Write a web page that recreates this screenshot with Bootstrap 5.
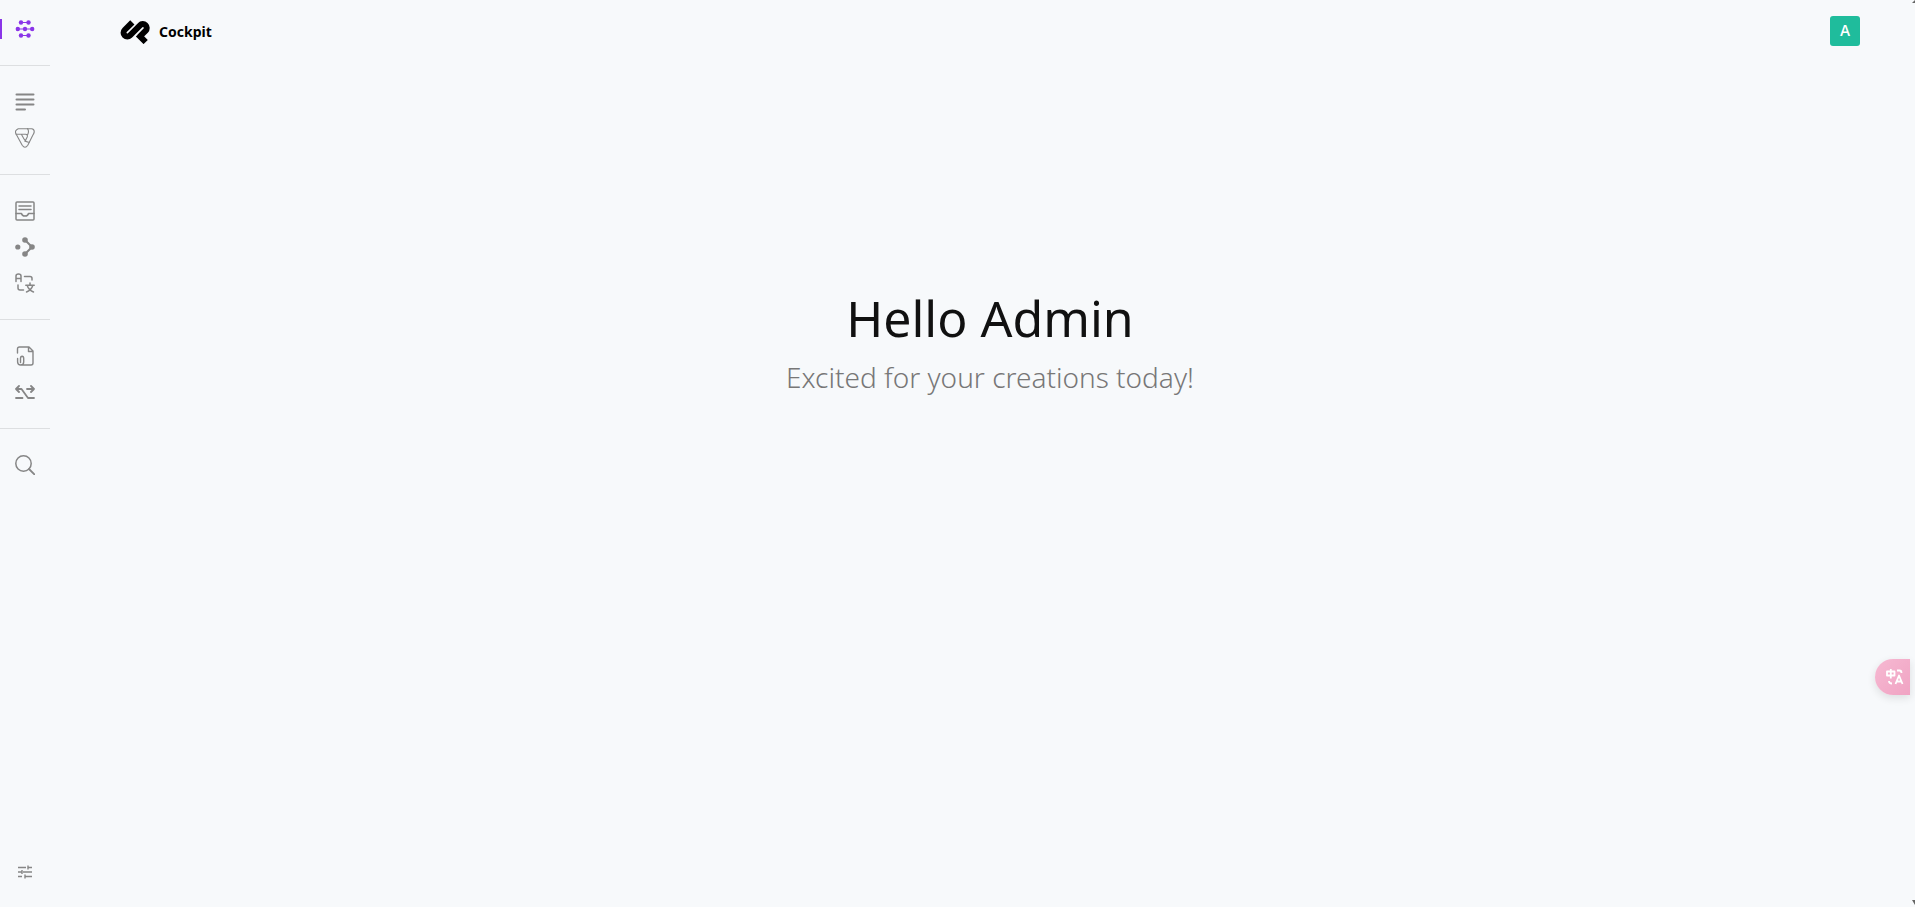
<!DOCTYPE html>
<html lang="en">
<head>
<meta charset="utf-8">
<meta name="viewport" content="width=device-width, initial-scale=1">
<title>Cockpit</title>
<link href="https://cdn.jsdelivr.net/npm/bootstrap@5.3.0/dist/css/bootstrap.min.css" rel="stylesheet">
<style>
body { background: #f7f9fb; color: #111; font-family: "Noto Sans", "Open Sans", sans-serif; }
.side { width: 50px; padding: 11px 0 17px; }
.side a { display: flex; height: 36px; align-items: center; justify-content: center; color: #868686; position: relative; }
.side a.active { color: #8a35e8; }
.side a.active::before { content: ""; position: absolute; left: 0; top: 8px; width: 2px; height: 20px; background: #8a35e8; }
.side hr { margin: 18px 0; border-top: 1px solid #dddfe1; opacity: 1; }
.side svg, .translate svg { fill: none; stroke: currentColor; stroke-width: 1.5; stroke-linecap: round; stroke-linejoin: round; }
.content { padding: 0 50px 0 70px; margin-right: 5px; }
.topbar { height: 62px; }
.brand { color: #000; font-size: 14px; font-weight: 700; gap: 9px; }
.avatar { width: 30px; height: 30px; border-radius: 3px; background: #1fbc9c; color: #fff; font: 500 15px/30px Inter, sans-serif; }
.hero { padding-top: 220px; }
.hero h1 { font-size: 50px; line-height: 72px; font-weight: 400; margin: 0; }
.hero p { font-size: 28px; line-height: 46px; font-weight: 300; color: #777; margin: 0; }
.translate { right: 5px; top: 659px; width: 35px; height: 36px; border-radius: 18px 0 0 18px; background: linear-gradient(135deg, #f6b9d2, #f0a3c3); color: #fff; padding-left: 10px; box-shadow: 0 3px 8px #0000001c; }
.arrow { right: 0; width: 3px; height: 3px; background: #666; }
.arrow.up { top: 0; clip-path: polygon(100% 0, 100% 100%, 0 100%); }
.arrow.down { bottom: 2px; height: 5px; clip-path: polygon(0 0, 100% 0, 100% 100%); }
</style>
</head>
<body class="d-flex min-vh-100">
<nav class="side d-flex flex-column flex-shrink-0" aria-label="Main">
  <a href="#" class="active" aria-label="Dashboard"><svg width="20" height="20" viewBox="0 0 20 20"><path d="M6 3.500h7.500M3 10h14M6 16.500h7.500" stroke-width="1"/><g fill="currentColor" stroke="none"><circle cx="6" cy="3.500" r="2.200"/><circle cx="13.500" cy="3.500" r="2.200"/><circle cx="2.800" cy="10" r="2.200"/><circle cx="10" cy="10" r="2.200"/><circle cx="17.200" cy="10" r="2.200"/><circle cx="6" cy="16.500" r="2.200"/><circle cx="13.500" cy="16.500" r="2.200"/></g></svg></a>
  <hr>
  <a href="#" aria-label="Content"><svg width="20" height="20" viewBox="0 0 20 20"><path d="M1.500 2.500h17M1.500 7.500h17M1.500 12.500h17M1.500 17.500h8.500" stroke-width="2"/></svg></a>
  <a href="#" aria-label="Assets"><svg width="20" height="20" viewBox="0 0 20 20"><g stroke-width="1.100"><path d="M3.200.7H16.600Q19.500 1 19.200 4.200Q18.900 5.800 17.900 7L12.800 17.300Q10 21.200 7.200 17.300L1.200 6.300Q-.9 2.600 3.200.7Z"/><path d="M1.200 6.300H10.500Q13 6.500 12.200 9L10 13.500M12.500 .7Q14.300 3 12.800 6.200L12.200 7.500M6.500 6.500L9 11Q11 14.500 14.300 14.200"/></g></svg></a>
  <hr>
  <a href="#" aria-label="Pages"><svg width="20" height="20" viewBox="0 0 20 20"><rect x="1" y="1" width="18" height="18" rx="1"/><path d="M4 5h12M4 8.500h12M1 12.500h5.500q.5 2.500 3.500 2.500t3.500-2.500H19"/></svg></a>
  <a href="#" aria-label="API"><svg width="20" height="20" viewBox="0 0 20 20"><path d="M10 3l7 7-7 7" stroke-width="2"/><g fill="currentColor" stroke="none"><circle cx="10" cy="3" r="2.800"/><circle cx="17" cy="10" r="2.800"/><circle cx="10" cy="17" r="2.800"/><circle cx="2.800" cy="10" r="2.600"/></g></svg></a>
  <a href="#" aria-label="Locales"><svg width="20" height="20" viewBox="0 0 20 20"><path d="M1 8.500V3Q1 1 3.500 1T6 3V8.500M1 5.500h5M9.500 3.500h5.500q2 0 2 2V7M3 12v3q0 2 2 2h3.500M10.800 12.200h8.400M15 10v2M12.200 12.500q1.500 4.500 6.300 6.500M17.800 12.500q-1.500 4.500-6.300 6.500"/></svg></a>
  <hr>
  <a href="#" aria-label="Logs"><svg width="20" height="20" viewBox="0 0 20 20"><path d="M2.500 7V3q0-2 2-2H14l4 4v12q0 2-2 2H5.500M13.500 1v4.500H18M5.500 16.500v-4q0-2.300 1.600-2.300t1.600 2.300v3.500q0 3-3 3T2.600 16v-3.500" stroke-width="1.400"/></svg></a>
  <a href="#" aria-label="Redirects"><svg width="20" height="20" viewBox="0 0 20 20"><path d="M4 4L1 7l3 3M1 7h5.500l6.500 9H19M1 16h6.500M12 7h7M16 4l3 3-3 3" stroke-width="1.800"/></svg></a>
  <hr>
  <a href="#" aria-label="Search"><svg width="20" height="20" viewBox="0 0 20 20"><circle cx="8.500" cy="8.500" r="7.700"/><path d="M14 14l5.500 5.500" stroke-width="1.800"/></svg></a>
  <a href="#" class="mt-auto" aria-label="Settings"><svg width="14" height="14" viewBox="0 0 14 14"><path d="M0 2.500h8M10 2.500h4M10 .5v4M0 7h4M5 7h9M4 5v4M0 11.500h4M7 11.500h7M7 9.500v4" stroke-linecap="butt" stroke-width="1.400"/></svg></a>
</nav>
<main class="content flex-grow-1">
  <header class="topbar d-flex align-items-center justify-content-between">
    <a href="#" class="brand d-flex align-items-center text-decoration-none">
      <svg width="30" height="26" viewBox="0 0 90 78" fill="none" stroke="#000" stroke-width="18" aria-hidden="true"><path d="M37 13L14 36A11.300 11.300 0 0 0 30 52L60 22A11.500 11.500 0 0 1 77 38L58 57M54 49L77 72"/></svg>
      <span>Cockpit</span>
    </a>
    <button type="button" class="avatar border-0 p-0 text-center" aria-label="Account">A</button>
  </header>
  <section class="hero text-center">
    <h1>Hello Admin</h1>
    <p>Excited for your creations today!</p>
  </section>
</main>
<button type="button" class="translate position-fixed border-0 d-flex align-items-center justify-content-center" aria-label="Translate"><svg width="18" height="18" viewBox="0 0 18 18"><path d="M1 3.500h7.500v4H1zM4.800 1v9.500M11 2.500h2.500q2 0 2 2.500M3 13q0 2.500 3 2.500M9.500 16l3.500-8.500 3.500 8.500M10.700 13.500h4.600" stroke-width="1.800" stroke-linecap="butt"/></svg></button>
<span class="arrow up position-fixed"></span>
<span class="arrow down position-fixed"></span>
<script src="https://cdn.jsdelivr.net/npm/bootstrap@5.3.0/dist/js/bootstrap.bundle.min.js"></script>
</body>
</html>
